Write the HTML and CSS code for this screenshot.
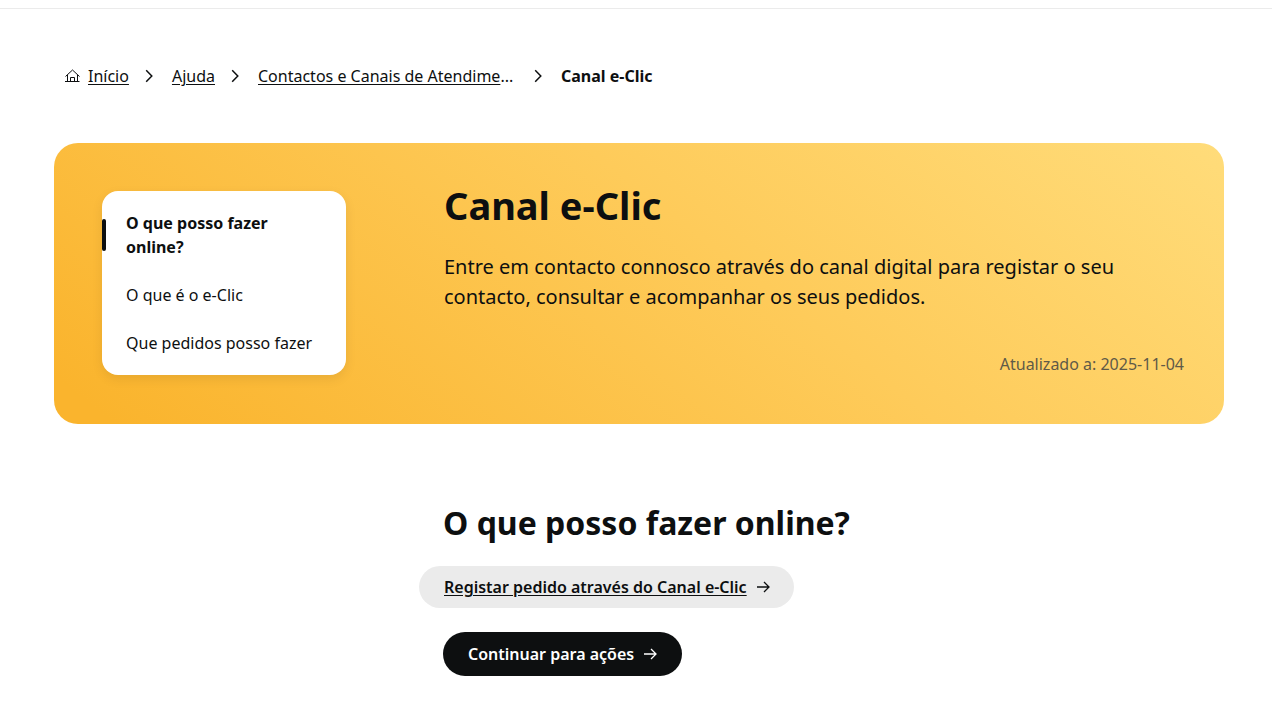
FILE: index.html
```html
<!DOCTYPE html>
<html lang="pt">
<head>
    <meta charset="UTF-8">
    <meta name="viewport" content="width=device-width, initial-scale=1.0">
    <title>Canal e-Clic</title>
    <link rel="stylesheet" href="styles.css">
</head>
<body>

    <header class="topbar"></header>

    <!-- Caminho de navegação -->
    <nav class="breadcrumb" aria-label="Caminho">
        <ol>
            <li>
                <svg class="home" viewBox="0 0 16 16" aria-hidden="true"><path d="M1 13.5h14.5M3.5 13.5V7M13.5 13.5V7M1.5 8.5L8.5 2l7 6.5M6.5 13.5V9.5h4v4"/></svg>
                <a href="#">Início</a>
                <svg class="chevron" viewBox="0 0 8 14" aria-hidden="true"><path d="M1.2 1.2L6.8 7l-5.6 5.8"/></svg>
            </li>
            <li>
                <a href="#">Ajuda</a>
                <svg class="chevron" viewBox="0 0 8 14" aria-hidden="true"><path d="M1.2 1.2L6.8 7l-5.6 5.8"/></svg>
            </li>
            <li>
                <span class="long"><a href="#">Contactos e Canais de Atendime</a>...</span>
                <svg class="chevron" viewBox="0 0 8 14" aria-hidden="true"><path d="M1.2 1.2L6.8 7l-5.6 5.8"/></svg>
            </li>
            <li aria-current="page">Canal e-Clic</li>
        </ol>
    </nav>

    <main>
        <section class="hero">
            <nav class="index" aria-label="Nesta página">
                <a class="active" href="#online">O que posso fazer online?</a>
                <a href="#eclic">O que é o e-Clic</a>
                <a href="#pedidos">Que pedidos posso fazer</a>
            </nav>
            <div class="intro">
                <h1>Canal e-Clic</h1>
                <p class="lead">Entre em contacto connosco através do canal digital para registar o seu contacto, consultar e acompanhar os seus pedidos.</p>
                <p class="updated">Atualizado a: 2025-11-04</p>
            </div>
        </section>

        <!-- Ações online -->
        <section class="content" id="online">
            <h2>O que posso fazer online?</h2>
            <a class="pill pill-link" href="#">
                <span>Registar pedido através do Canal e-Clic</span>
                <svg class="arrow" viewBox="0 0 14 12" aria-hidden="true"><path d="M1 6h12M8 1l5 5-5 5"/></svg>
            </a>
            <button class="pill pill-dark" type="button">
                <span>Continuar para ações</span>
                <svg class="arrow" viewBox="0 0 14 12" aria-hidden="true"><path d="M1 6h12M8 1l5 5-5 5"/></svg>
            </button>
        </section>
    </main>

</body>
</html>
```
FILE: styles.css
```css
* {
    margin: 0;
    padding: 0;
    box-sizing: border-box;
}

body {
    font-family: "Noto Sans", sans-serif;
    font-size: 16px;
    line-height: 24px;
    color: #0d0f10;
    background-color: #fff;
}

a {
    color: inherit;
}

svg {
    flex: none;
    fill: none;
    stroke: currentColor;
}

.topbar {
    height: 9px;
    border-bottom: 1px solid #ebebeb;
}

/* Caminho de navegação */
.breadcrumb {
    padding: 55px 64px 0;
}

.breadcrumb ol,
.breadcrumb li {
    display: flex;
    align-items: center;
    list-style: none;
}

.breadcrumb a {
    text-underline-offset: 2px;
}

.breadcrumb .long {
    min-width: 260px;
}

.breadcrumb [aria-current] {
    font-weight: 700;
}

.home {
    width: 16px;
    height: 16px;
    margin-right: 8px;
}

.chevron {
    width: 8px;
    height: 14px;
    margin: 0 19px 0 16px;
    stroke-width: 1.5;
}

/* Destaque */
.hero {
    display: grid;
    grid-template-columns: 244px 1fr;
    column-gap: 98px;
    align-items: start;
    margin: 55px 48px 0 54px;
    padding: 48px 40px 48px 48px;
    border-radius: 24px;
    background: linear-gradient(38deg, #fab42d 4%, #fecb5a 58%, #ffdc7a);
}

.index {
    padding: 8px 0;
    border-radius: 16px;
    background-color: #fff;
    box-shadow: 0 4px 12px rgba(0, 0, 0, 0.08);
}

.index a {
    display: block;
    position: relative;
    padding: 12px 24px;
    text-decoration: none;
}

.index .active {
    font-weight: 700;
}

.index .active::before {
    content: "";
    position: absolute;
    left: 0;
    top: 20px;
    width: 4px;
    height: 32px;
    border-radius: 2px;
    background-color: #0d0f10;
}

h1 {
    font-size: 38px;
    line-height: 28px;
}

.lead {
    margin-top: 33px;
    font-size: 20px;
    line-height: 30px;
}

.updated {
    margin-top: 40px;
    text-align: right;
    color: #5f5a48;
}

/* Ações */
.content {
    display: flex;
    flex-direction: column;
    align-items: flex-start;
    margin: 76px 48px 44px 443px;
}

h2 {
    font-size: 32px;
    line-height: 46px;
}

.pill {
    display: flex;
    align-items: center;
    gap: 9px;
    padding: 0 25px;
    border: none;
    border-radius: 24px;
    font: inherit;
    font-weight: 600;
    cursor: pointer;
}

.pill-link {
    height: 42px;
    margin: 20px 0 0 -24px;
    padding-right: 24px;
    background-color: #ebebeb;
    text-underline-offset: 2px;
}

.pill-dark {
    height: 44px;
    margin-top: 24px;
    color: #fff;
    background-color: #0d0f10;
}

.arrow {
    width: 14px;
    height: 12px;
    stroke-width: 1.3;
}
```
